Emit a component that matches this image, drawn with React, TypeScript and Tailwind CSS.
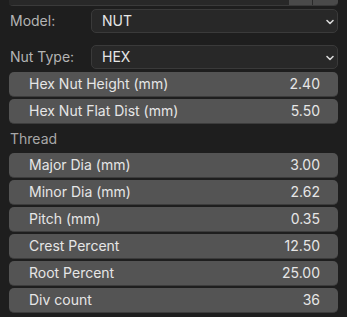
import React from "react";

function Chevron() {
  return (
    <svg width="10" height="10" viewBox="0 0 10 10" className="shrink-0 mt-[2px]">
      <path d="M2 3.5 L5 6.5 L8 3.5" stroke="#d8d8d8" strokeWidth="1.6" fill="none" strokeLinecap="round" strokeLinejoin="round" />
    </svg>
  );
}

function Select({ label, value }: { label: string; value: string }) {
  return (
    <div className="flex items-center h-[24px]">
      <div className="w-[82px] pl-[1px] text-[#b4b4b4]">{label}</div>
      <div className="flex-1 h-full flex items-center justify-between rounded-[5px] bg-[#282828] border border-[#3a3a3a] pl-[10px] pr-[2px] text-[#e6e6e6]">
        <span>{value}</span>
        <Chevron />
      </div>
    </div>
  );
}

function Field({ label, value }: { label: string; value: string }) {
  return (
    <div className="h-[25px] flex items-center justify-between rounded-[5px] bg-[#545454] border-b border-[#3c3c3c] pl-[20px] pr-[18px] text-[#e6e6e6]">
      <span>{label}</span>
      <span>{value}</span>
    </div>
  );
}

export default function App() {
  return (
    <div
      className="w-[347px] h-[317px] bg-[#1e1e1e] overflow-hidden text-[14px] leading-none"
      style={{ fontFamily: "Inter, 'Noto Sans', sans-serif" }}
    >
      <div className="pl-[9px] pr-[9px]">
        <div className="h-[6px] mt-0 flex rounded-b-[4px] overflow-hidden border-b border-[#3a3a3a]">
          <div className="flex-1 bg-[#282828]" />
          <div className="w-[24px] bg-[#4a4a4a] border-r border-[#2a2a2a]" />
          <div className="w-[25px] bg-[#4a4a4a]" />
        </div>
        <div className="flex flex-col">
          <div className="mt-[3px]">
            <Select label="Model:" value="NUT" />
          </div>
          <div className="mt-[12px]">
            <Select label="Nut Type:" value="HEX" />
          </div>
          <div className="mt-[3px] flex flex-col gap-[2px]">
            <Field label="Hex Nut Height (mm)" value="2.40" />
            <Field label="Hex Nut Flat Dist (mm)" value="5.50" />
          </div>
          <div className="h-[29px] flex items-center pl-[1px] text-[#a8a8a8]">Thread</div>
          <div className="flex flex-col gap-[2px]">
            <Field label="Major Dia (mm)" value="3.00" />
            <Field label="Minor Dia (mm)" value="2.62" />
            <Field label="Pitch (mm)" value="0.35" />
            <Field label="Crest Percent" value="12.50" />
            <Field label="Root Percent" value="25.00" />
            <Field label="Div count" value="36" />
          </div>
        </div>
      </div>
    </div>
  );
}
